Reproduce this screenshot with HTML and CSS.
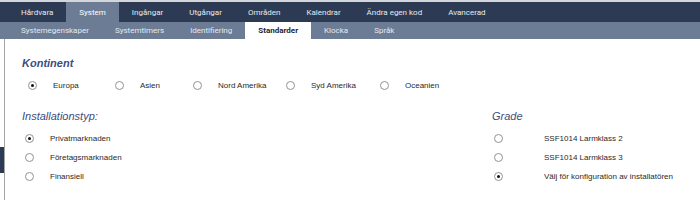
FILE: index.html
```html
<html>
<head>
  <link rel="stylesheet" href="styles.css">
</head>
<body>
  <div class="topstrip"></div>
  <div class="mainnav">
    <div class="tab">Hårdvara</div>
    <div class="tab active">System</div>
    <div class="tab">Ingångar</div>
    <div class="tab">Utgångar</div>
    <div class="tab">Områden</div>
    <div class="tab">Kalendrar</div>
    <div class="tab">Ändra egen kod</div>
    <div class="tab">Avancerad</div>
  </div>
  <div class="subnav">
    <div class="subtab">Systemegenskaper</div>
    <div class="subtab">Systemtimers</div>
    <div class="subtab">Identifiering</div>
    <div class="subtab active">Standarder</div>
    <div class="subtab">Klocka</div>
    <div class="subtab">Språk</div>
  </div>
  <div class="page">
    <div class="sidebar"><div class="sidemark"></div></div>
    <div class="content">
      <div class="heading bold">Kontinent</div>
      <div class="inline-options">
        <div class="option w-europa"><span class="radio checked"></span>Europa</div>
        <div class="option w-asien"><span class="radio"></span>Asien</div>
        <div class="option w-nord"><span class="radio"></span>Nord Amerika</div>
        <div class="option w-syd"><span class="radio"></span>Syd Amerika</div>
        <div class="option"><span class="radio"></span>Oceanien</div>
      </div>
      <div class="columns">
        <div class="col">
          <div class="heading">Installationstyp:</div>
          <div class="list">
            <div class="row"><span class="radio checked"></span>Privatmarknaden</div>
            <div class="row"><span class="radio"></span>Företagsmarknaden</div>
            <div class="row"><span class="radio"></span>Finansiell</div>
          </div>
        </div>
        <div class="col grade">
          <div class="heading">Grade</div>
          <div class="list">
            <div class="row"><span class="radio"></span>SSF1014 Larmklass 2</div>
            <div class="row"><span class="radio"></span>SSF1014 Larmklass 3</div>
            <div class="row"><span class="radio checked"></span>Välj för konfiguration av installatören</div>
          </div>
        </div>
      </div>
    </div>
  </div>
</body>
</html>
```
FILE: styles.css
```css
html, body {
  margin: 0;
  padding: 0;
  background: #fff;
  font-family: 'Liberation Sans', Arial, sans-serif;
  width: 700px;
  height: 200px;
  overflow: hidden;
}
.topstrip {
  height: 2px;
  background: #d3d6db;
}
.mainnav {
  display: flex;
  height: 20px;
  background: #2c3b53;
  padding-left: 8px;
  font-family: Roboto, sans-serif;
  font-size: 8px;
  color: #e6e9ee;
}
.tab {
  padding: 1px 13px 0 13px;
  line-height: 19px;
}
.tab.active {
  background: #6c7c95;
  color: #fff;
}
.subnav {
  display: flex;
  height: 17px;
  background: #6c7c95;
  padding-left: 8px;
  font-family: Roboto, sans-serif;
  font-size: 8px;
  color: #e4e8ee;
}
.subtab {
  padding: 1px 13px 0 13px;
  line-height: 16px;
}
.subtab.active {
  background: #fff;
  color: #1d2535;
  font-weight: bold;
}
.page {
  display: flex;
  height: 161px;
}
.sidebar {
  width: 4px;
}
.sidemark {
  margin-top: 108px;
  height: 26px;
  background: #2c3b53;
}
.content {
  flex: 1;
  border-left: 1px solid #a4a4a4;
  padding: 18px 0 0 17px;
  font-size: 8px;
  color: #2a2a2a;
}
.heading {
  font-size: 11px;
  font-style: italic;
  font-weight: normal;
  color: #3e4c7c;
  height: 14px;
}
.heading.bold {
  font-weight: bold;
}
.inline-options {
  display: flex;
  margin-top: 8px;
  height: 12px;
  align-items: center;
}
.option {
  display: flex;
  align-items: center;
}
.w-europa { width: 87px; }
.w-asien { width: 78px; }
.w-nord { width: 93px; }
.w-syd { width: 94px; }
.radio {
  width: 9px;
  height: 9px;
  border: 1px solid #939393;
  border-radius: 50%;
  box-sizing: border-box;
  margin: 0 16px 0 6px;
  position: relative;
  background: #fff;
}
.radio.checked::after {
  content: "";
  position: absolute;
  left: 2px;
  top: 2px;
  width: 3px;
  height: 3px;
  border-radius: 50%;
  background: #111;
}
.columns {
  display: flex;
  margin-top: 19px;
}
.col {
  width: 470px;
}
.col.grade {
  width: auto;
}
.list {
  margin-top: 5px;
}
.row {
  display: flex;
  align-items: center;
  height: 19px;
}
.col .row .radio {
  margin: 0 16px 0 3px;
}
.grade .row .radio {
  margin: 0 41px 0 2px;
}
```
